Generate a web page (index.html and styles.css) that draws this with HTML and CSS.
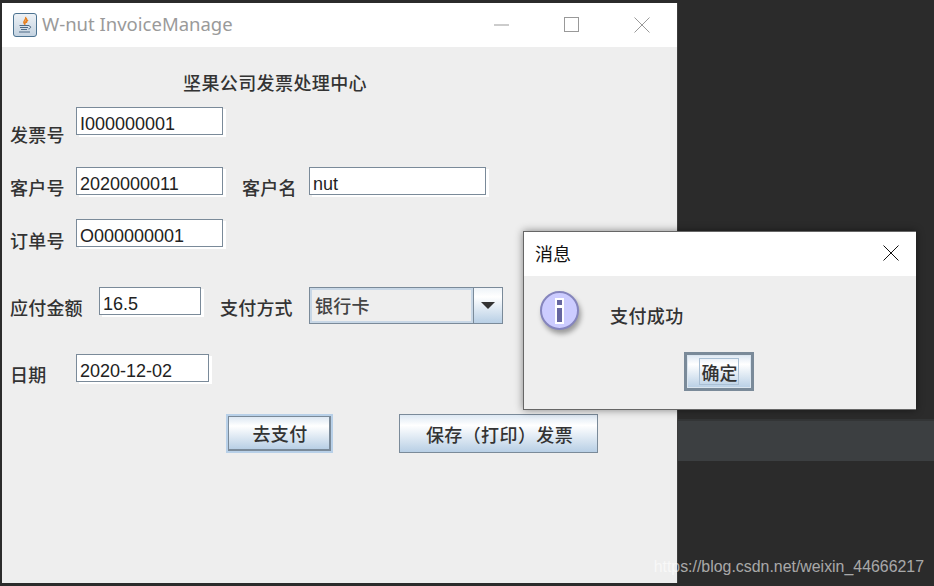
FILE: index.html
```html
<!DOCTYPE html>
<html lang="zh-CN">
<head>
<meta charset="utf-8">
<title>W-nut InvoiceManage</title>
<link rel="stylesheet" href="styles.css">
</head>
<body>
<main class="desktop">
  <div class="strip"></div>

  <section class="window main-window">
    <header class="titlebar">
      <svg class="app-icon" width="24" height="24" viewBox="0 0 24 24">
        <defs>
          <linearGradient id="ig" x1="0" y1="0" x2="0" y2="1">
            <stop offset="0" stop-color="#eef2f6"/>
            <stop offset="1" stop-color="#c3d2e0"/>
          </linearGradient>
        </defs>
        <rect x="0.5" y="0.5" width="23" height="23" rx="2.5" fill="url(#ig)" stroke="#4d7391"/>
        <path d="M12.5 4c1.5 2-2.5 3.5-1.5 6 .3.8.8 1.3 1.2 1.6-1.8-2 2.8-3.5 1.2-6.2M15 7c-.8.8-1.8 1.4-1.6 3" fill="none" stroke="#e8801f" stroke-width="1.4"/>
        <path d="M6.5 12.5h9.5M7 14.5h8M8 16.5h6M6 19h11M16 13c2.2-.3 2.4 2.4-.5 3" fill="none" stroke="#4f6b86" stroke-width="1"/>
      </svg>
      <h1 class="app-title">W-nut InvoiceManage</h1>
      <div class="controls">
        <span class="control"><svg width="16" height="16" viewBox="0 0 16 16"><path d="M0 8h15" stroke="#999" fill="none"/></svg></span>
        <span class="control"><svg width="16" height="16" viewBox="0 0 16 16"><rect x="0.5" y="0.5" width="14" height="14" stroke="#999" fill="none"/></svg></span>
        <span class="control"><svg width="16" height="16" viewBox="0 0 16 16"><path d="M0.5 0.5l15 15M15.5 0.5l-15 15" stroke="#999" fill="none"/></svg></span>
      </div>
    </header>

    <form class="form">
      <h2 class="heading">坚果公司发票处理中心</h2>

      <div class="row row-a">
        <label class="label w-66 drop-15">发票号</label>
        <input class="field w-147" value="I000000001">
      </div>
      <div class="row row-b">
        <label class="label w-66 drop-8">客户号</label>
        <input class="field w-147" value="2020000011">
        <label class="label gap-left-19 drop-8 w-67">客户名</label>
        <input class="field w-177" value="nut">
      </div>
      <div class="row row-c">
        <label class="label w-66 drop-9">订单号</label>
        <input class="field w-147" value="O000000001">
      </div>
      <div class="row row-d">
        <label class="label w-89 drop-8">应付金额</label>
        <input class="field w-102" value="16.5">
        <label class="label gap-left-19 drop-8 w-89">支付方式</label>
        <div class="combo">
          <span class="combo-value">银行卡</span>
          <span class="combo-arrow"><svg width="14" height="7" viewBox="0 0 14 7"><path d="M0 0h14L7 7z" fill="#333"/></svg></span>
        </div>
      </div>
      <div class="row row-e">
        <label class="label w-66 drop-8">日期</label>
        <input class="field w-133" value="2020-12-02">
      </div>
      <div class="actions">
        <button type="button" class="btn btn-pay">去支付</button>
        <button type="button" class="btn btn-save">保存（打印）发票</button>
      </div>
    </form>
  </section>

  <section class="window dialog">
    <header class="dialog-title">
      <span class="dialog-name">消息</span>
      <svg class="dialog-close" width="16" height="16" viewBox="0 0 16 16"><path d="M0.5 0.5l15 15M15.5 0.5l-15 15" stroke="#111" fill="none"/></svg>
    </header>
    <div class="dialog-body">
      <div class="message">
        <span class="info-icon"><span class="info-i"></span></span>
        <span class="message-text">支付成功</span>
      </div>
      <div class="dialog-actions">
        <button type="button" class="btn btn-ok"><span class="focus-box">确定</span></button>
      </div>
    </div>
  </section>

  <span class="watermark">https://blog.csdn.net/weixin_44666217</span>
</main>
</body>
</html>
```
FILE: styles.css
```css
* { box-sizing: border-box; }
html, body { margin: 0; padding: 0; }
body { width: 934px; height: 586px; overflow: hidden; background: #2b2b2b; }
.desktop { position: relative; width: 934px; height: 586px; background: #2b2b2b; overflow: hidden; font-family: "Noto Sans CJK SC", "Liberation Sans", sans-serif; }

.strip { position: absolute; left: 677px; top: 419px; right: 0; height: 42px; background: #3c3f41; border-top: 2px solid #333536; }

.window { position: absolute; background: #eeeeee; }
.main-window { left: 2px; top: 3px; width: 676px; height: 580px; border-right: 1px solid #3c3c3c; }

.titlebar { display: flex; align-items: center; height: 44px; background: #fff; padding-left: 11px; }
.app-icon { flex: none; margin-top: -1px; }
.app-title { margin: -2px 0 0 5px; font: 400 18.5px/24px "Noto Sans", sans-serif; color: #9a9a9a; }
.controls { display: flex; margin-left: auto; }
.control { display: flex; align-items: center; justify-content: center; width: 70px; height: 44px; }

.form { padding: 23px 0 0 8px; }
.heading { margin: 0 0 13px 173px; font-size: 18px; font-weight: 500; line-height: 24px; letter-spacing: .4px; color: #333; }

.row { display: flex; align-items: flex-start; }
.row-a { height: 60px; }
.row-b { height: 52px; }
.row-c { height: 68px; }
.row-d { height: 67px; }
.row-e { height: 60px; }

.label { flex: none; font-size: 18px; font-weight: 500; line-height: 24px; color: #333; letter-spacing: .2px; white-space: nowrap; }
.w-66 { width: 66px; }
.w-67 { width: 67px; }
.w-89 { width: 89px; }
.gap-left-19 { margin-left: 19px; }
.drop-8 { margin-top: 8px; }
.drop-9 { margin-top: 9px; }
.drop-15 { margin-top: 15px; }

.field { flex: none; height: 28px; padding: 6px 0 0 3px; border: 1px solid #7a8a99; border-radius: 0; background: #fff; box-shadow: 3px 2px 0 #fff; font: 400 18px "Liberation Sans", sans-serif; color: #222; outline: none; }
.w-147 { width: 147px; }
.w-177 { width: 177px; }
.w-102 { width: 102px; }
.w-133 { width: 133px; }

.combo { flex: none; display: flex; width: 194px; height: 37px; border: 1px solid #7a8a99; background: #eee; }
.combo-value { flex: 1; padding-left: 3px; border: 2px solid #c8d7e6; font-size: 18px; font-weight: 500; line-height: 30px; letter-spacing: .2px; color: #444; }
.combo-arrow { flex: none; display: flex; align-items: center; justify-content: center; width: 29px; border-left: 1px solid #7a8a99; background: linear-gradient(#eef3f8, #fff 25%, #b8cfe5); }

.actions { display: flex; padding-left: 216px; }
.btn { display: block; padding: 0; border: 1px solid #7a8a99; background: linear-gradient(#dde8f3, #fff 28%, #b8cfe5); font-family: "Noto Sans CJK SC", sans-serif; font-size: 18px; font-weight: 500; line-height: 24px; letter-spacing: .4px; color: #333; }
.btn-pay { width: 103px; height: 35px; margin: 2px 68px 2px 2px; padding-left: 2px; box-shadow: 0 0 0 2px #b8d0e8; border-width: 1px 2px 2px 1px; }
.btn-save { width: 199px; height: 39px; padding-left: 2px; }

.dialog { left: 523px; top: 231px; width: 393px; height: 179px; border: solid #666; border-width: 1px 0 1px 1px; box-shadow: 0 0 8px rgba(0,0,0,.45); }
.dialog-title { display: flex; align-items: center; justify-content: space-between; height: 44px; padding: 0 17px 2px 11px; background: #fff; }
.dialog-name { font-size: 18px; line-height: 24px; color: #111; }
.dialog-body { height: 133px; }
.message { display: flex; align-items: flex-start; padding: 15px 0 0 16px; height: 76px; }
.info-icon { flex: none; display: flex; align-items: center; justify-content: center; width: 39px; height: 39px; border: 2px solid #8585bd; border-radius: 50%; background: #ccccff; box-shadow: 2px 4px 5px rgba(0,0,0,.35); }
.info-i { display: block; width: 9px; height: 26px; background: linear-gradient(#6666a0 0 5px, #fff 5px 8px, #6666a0 8px); border: 2px solid #fff; }
.message-text { margin: 12px 0 0 31px; font-size: 18px; font-weight: 500; line-height: 24px; letter-spacing: .4px; color: #333; }
.dialog-actions { display: flex; padding-left: 160px; }
.btn-ok { display: flex; align-items: center; justify-content: center; width: 70px; height: 39px; border: 3px solid #7a8a99; box-shadow: inset 0 0 0 1px #dbe6f0; }
.focus-box { display: block; width: 40px; height: 27px; padding-left: 1px; border: 1px solid #a9bfd4; font-size: 18px; line-height: 26px; letter-spacing: 0; white-space: nowrap; text-align: center; }

.watermark { position: absolute; right: 10px; bottom: 9px; font: 400 15.9px/20px "Liberation Sans", sans-serif; color: rgba(255,255,255,.6); pointer-events: none; }
```
